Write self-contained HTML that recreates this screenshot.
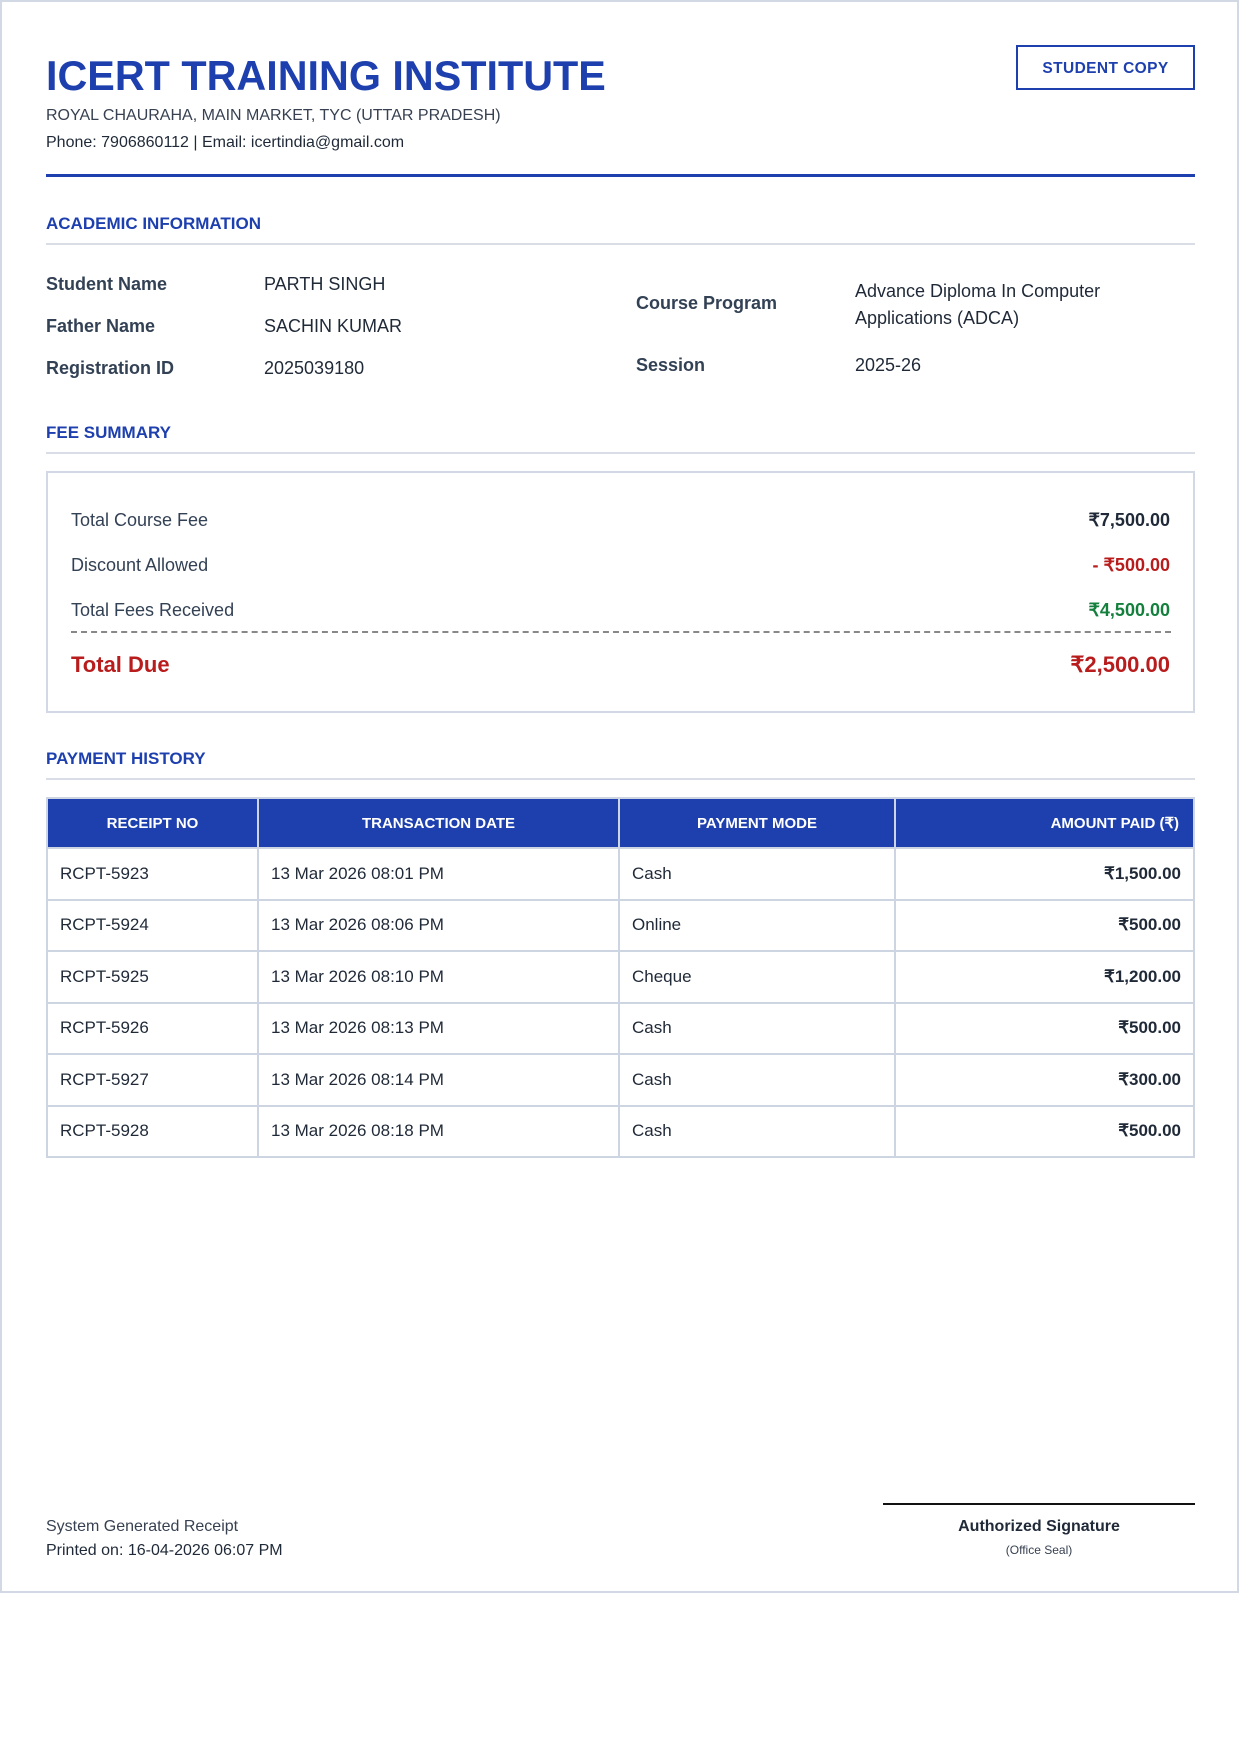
<!DOCTYPE html>
<html><head><meta charset="utf-8"><style>
*{margin:0;padding:0;box-sizing:border-box}
body{width:1240px;height:1754px;background:#fff;font-family:"Liberation Sans",sans-serif;position:relative;overflow:hidden}
.page{position:absolute;left:0;top:0;width:1239px;height:1593px;border:2px solid #d3d9e4}
.a{position:absolute;white-space:nowrap}
.blue{color:#1e40af}
.sec{font-size:17px;font-weight:bold;color:#1e40af}
.hr{position:absolute;left:46px;width:1149px;height:2px;background:#d8dde6}
.lab{font-size:18px;font-weight:bold;color:#334155}
.val{font-size:18px;color:#1f2937}
.fl{font-size:18px;color:#334155}
.fr{font-size:18px;font-weight:bold;right:70px}
table{position:absolute;left:46px;top:797px;width:1149px;border-collapse:collapse}
th{background:#1e40af;color:#fff;font-size:15px;font-weight:bold;height:50px;border:2px solid #cdd5e2;text-align:center}
td{height:51.5px;border:2px solid #cdd5e2;font-size:17px;color:#1f2937;padding:0 12px}
</style></head><body>
<div class="page"></div>
<div class="a blue" style="left:46px;top:53px;font-size:41.3px;font-weight:bold;line-height:46px">ICERT TRAINING INSTITUTE</div>
<div class="a" style="left:46px;top:107px;font-size:16px;color:#374151">ROYAL CHAURAHA, MAIN MARKET, TYC (UTTAR PRADESH)</div>
<div class="a" style="left:46px;top:134px;font-size:16px;color:#1f2937">Phone: 7906860112 | Email: icertindia@gmail.com</div>
<div class="a blue" style="left:1016px;top:45px;width:179px;height:45px;border:2px solid #1e40af;font-size:15.5px;font-weight:bold;line-height:43px;text-align:center;letter-spacing:.4px">STUDENT COPY</div>
<div style="position:absolute;left:46px;top:174px;width:1149px;height:3px;background:#1e40af"></div>

<div class="a sec" style="left:46px;top:214px">ACADEMIC INFORMATION</div>
<div class="hr" style="top:243px"></div>
<div class="a lab" style="left:46px;top:274px">Student Name</div>
<div class="a val" style="left:264px;top:274px">PARTH SINGH</div>
<div class="a lab" style="left:46px;top:316px">Father Name</div>
<div class="a val" style="left:264px;top:316px">SACHIN KUMAR</div>
<div class="a lab" style="left:46px;top:358px">Registration ID</div>
<div class="a val" style="left:264px;top:358px">2025039180</div>
<div class="a lab" style="left:636px;top:293px">Course Program</div>
<div class="a val" style="left:855px;top:278px;line-height:27px">Advance Diploma In Computer<br>Applications (ADCA)</div>
<div class="a lab" style="left:636px;top:355px">Session</div>
<div class="a val" style="left:855px;top:355px">2025-26</div>

<div class="a sec" style="left:46px;top:423px">FEE SUMMARY</div>
<div class="hr" style="top:452px"></div>
<div style="position:absolute;left:46px;top:471px;width:1149px;height:242px;border:2px solid #d3d9e4"></div>
<div class="a fl" style="left:71px;top:510px">Total Course Fee</div>
<div class="a fr" style="top:510px;color:#1f2937">₹7,500.00</div>
<div class="a fl" style="left:71px;top:555px">Discount Allowed</div>
<div class="a fr" style="top:555px;color:#b91c1c">- ₹500.00</div>
<div class="a fl" style="left:71px;top:600px">Total Fees Received</div>
<div class="a fr" style="top:600px;color:#15803d">₹4,500.00</div>
<div style="position:absolute;left:71px;top:631px;width:1100px;border-top:2px dashed #888"></div>
<div class="a" style="left:71px;top:652px;font-size:22px;font-weight:bold;color:#b91c1c">Total Due</div>
<div class="a" style="right:70px;top:652px;font-size:22px;font-weight:bold;color:#b91c1c">₹2,500.00</div>

<div class="a sec" style="left:46px;top:749px">PAYMENT HISTORY</div>
<div class="hr" style="top:778px"></div>
<table>
<tr><th style="width:211px">RECEIPT NO</th><th style="width:361px">TRANSACTION DATE</th><th style="width:276px">PAYMENT MODE</th><th style="text-align:right;padding-right:14px">AMOUNT PAID (₹)</th></tr>
<tr><td>RCPT-5923</td><td>13 Mar 2026 08:01 PM</td><td>Cash</td><td style="text-align:right;font-weight:bold">₹1,500.00</td></tr>
<tr><td>RCPT-5924</td><td>13 Mar 2026 08:06 PM</td><td>Online</td><td style="text-align:right;font-weight:bold">₹500.00</td></tr>
<tr><td>RCPT-5925</td><td>13 Mar 2026 08:10 PM</td><td>Cheque</td><td style="text-align:right;font-weight:bold">₹1,200.00</td></tr>
<tr><td>RCPT-5926</td><td>13 Mar 2026 08:13 PM</td><td>Cash</td><td style="text-align:right;font-weight:bold">₹500.00</td></tr>
<tr><td>RCPT-5927</td><td>13 Mar 2026 08:14 PM</td><td>Cash</td><td style="text-align:right;font-weight:bold">₹300.00</td></tr>
<tr><td>RCPT-5928</td><td>13 Mar 2026 08:18 PM</td><td>Cash</td><td style="text-align:right;font-weight:bold">₹500.00</td></tr>
</table>

<div style="position:absolute;left:883px;top:1503px;width:312px;height:2px;background:#111"></div>
<div class="a" style="left:46px;top:1518px;font-size:16px;color:#374151">System Generated Receipt</div>
<div class="a" style="left:46px;top:1542px;font-size:16px;color:#1f2937">Printed on: 16-04-2026 06:07 PM</div>
<div class="a" style="left:883px;width:312px;text-align:center;top:1518px;font-size:16px;font-weight:bold;color:#1f2937">Authorized Signature</div>
<div class="a" style="left:883px;width:312px;text-align:center;top:1543px;font-size:12px;color:#374151">(Office Seal)</div>
</body></html>
